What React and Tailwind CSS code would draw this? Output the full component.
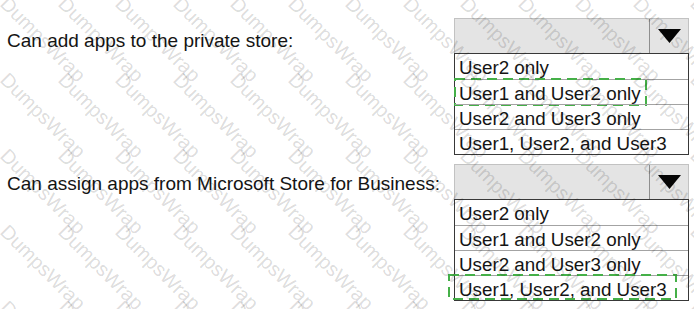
// App.jsx
import React from "react";

const options = [
    "User2 only",
    "User1 and User2 only",
    "User2 and User3 only",
    "User1, User2, and User3",
];

// Green dashed "answer" box drawn over the chosen option
const AnswerBox = ({ className }) => (
    <svg className={`absolute pointer-events-none ${className}`} preserveAspectRatio="none">
        <rect x="1" y="1" width="calc(100% - 2px)" height="calc(100% - 2px)" fill="none" stroke="#45b048" strokeWidth="2" strokeDasharray="10 6" />
    </svg>
);

const Dropdown = ({ answer, boxClass }) => (
    <div className="w-[235px]">
        <div className="h-[35px] flex border border-b-0 border-[#c2c2c2] bg-[#e4e4e4]">
            <div className="flex-1" />
            <div className="w-[39px] border-l border-[#8e8e8e] flex items-center justify-center">
                <svg width="23" height="14" viewBox="0 0 23 14">
                    <polygon points="0,0 23,0 11.5,14" fill="#050505" />
                </svg>
            </div>
        </div>
        <ul className="border border-[#383838] bg-white">
            {options.map((opt, i) => (
                <li
                    key={opt}
                    className={`relative h-[25px] pl-[4px] pt-[2px] text-[18.8px] leading-[24px] whitespace-nowrap ${i > 0 ? "border-t border-[#a3a3a3]" : ""}`}
                >
                    {opt}
                    {i === answer && <AnswerBox className={boxClass} />}
                </li>
            ))}
        </ul>
    </div>
);

const Row = ({ label, answer, boxClass, labelPad, className }) => (
    <div className={`flex ${className}`}>
        <div className={`w-[447px] text-[19px] leading-[20px] whitespace-nowrap ${labelPad}`}>{label}</div>
        <Dropdown answer={answer} boxClass={boxClass} />
    </div>
);

// faint diagonal "DumpsWrap" stamp laid over the whole shot
const Watermark = () => {
    const marks = [];
    for (let r = 0; r < 5; r++) {
        for (let c = 0; c < 13; c++) {
            marks.push({ x: c * 57.5 + 11, y: r * 76 - 7 });
        }
    }
    return (
        <div className="absolute inset-0 pointer-events-none overflow-hidden" aria-hidden="true">
            {marks.map((m, i) => (
                <span
                    key={i}
                    className="absolute origin-top-left rotate-45 text-[20px] leading-none text-black/[0.15] whitespace-nowrap"
                    style={{ left: m.x, top: m.y }}
                >
                    DumpsWrap
                </span>
            ))}
        </div>
    );
};

const App = () => {
    return (
        <div className="relative w-[694px] h-[309px] bg-white overflow-hidden font-['Liberation_Sans',Arial,sans-serif] text-[#141414]">
            <div className="flex flex-col pl-[7px] pt-[18px]">
                <Row
                    label="Can add apps to the private store:"
                    answer={1}
                    boxClass="left-[-1px] top-[-2px] w-[193px] h-[28px]"
                    labelPad="pt-[13px]"
                />
                <Row
                    label="Can assign apps from Microsoft Store for Business:"
                    answer={3}
                    boxClass="left-[-7px] top-[-2px] w-[229px] h-[26px]"
                    labelPad="pt-[10px]"
                    className="mt-[9px]"
                />
            </div>
            <Watermark />
        </div>
    );
};

export default App;
